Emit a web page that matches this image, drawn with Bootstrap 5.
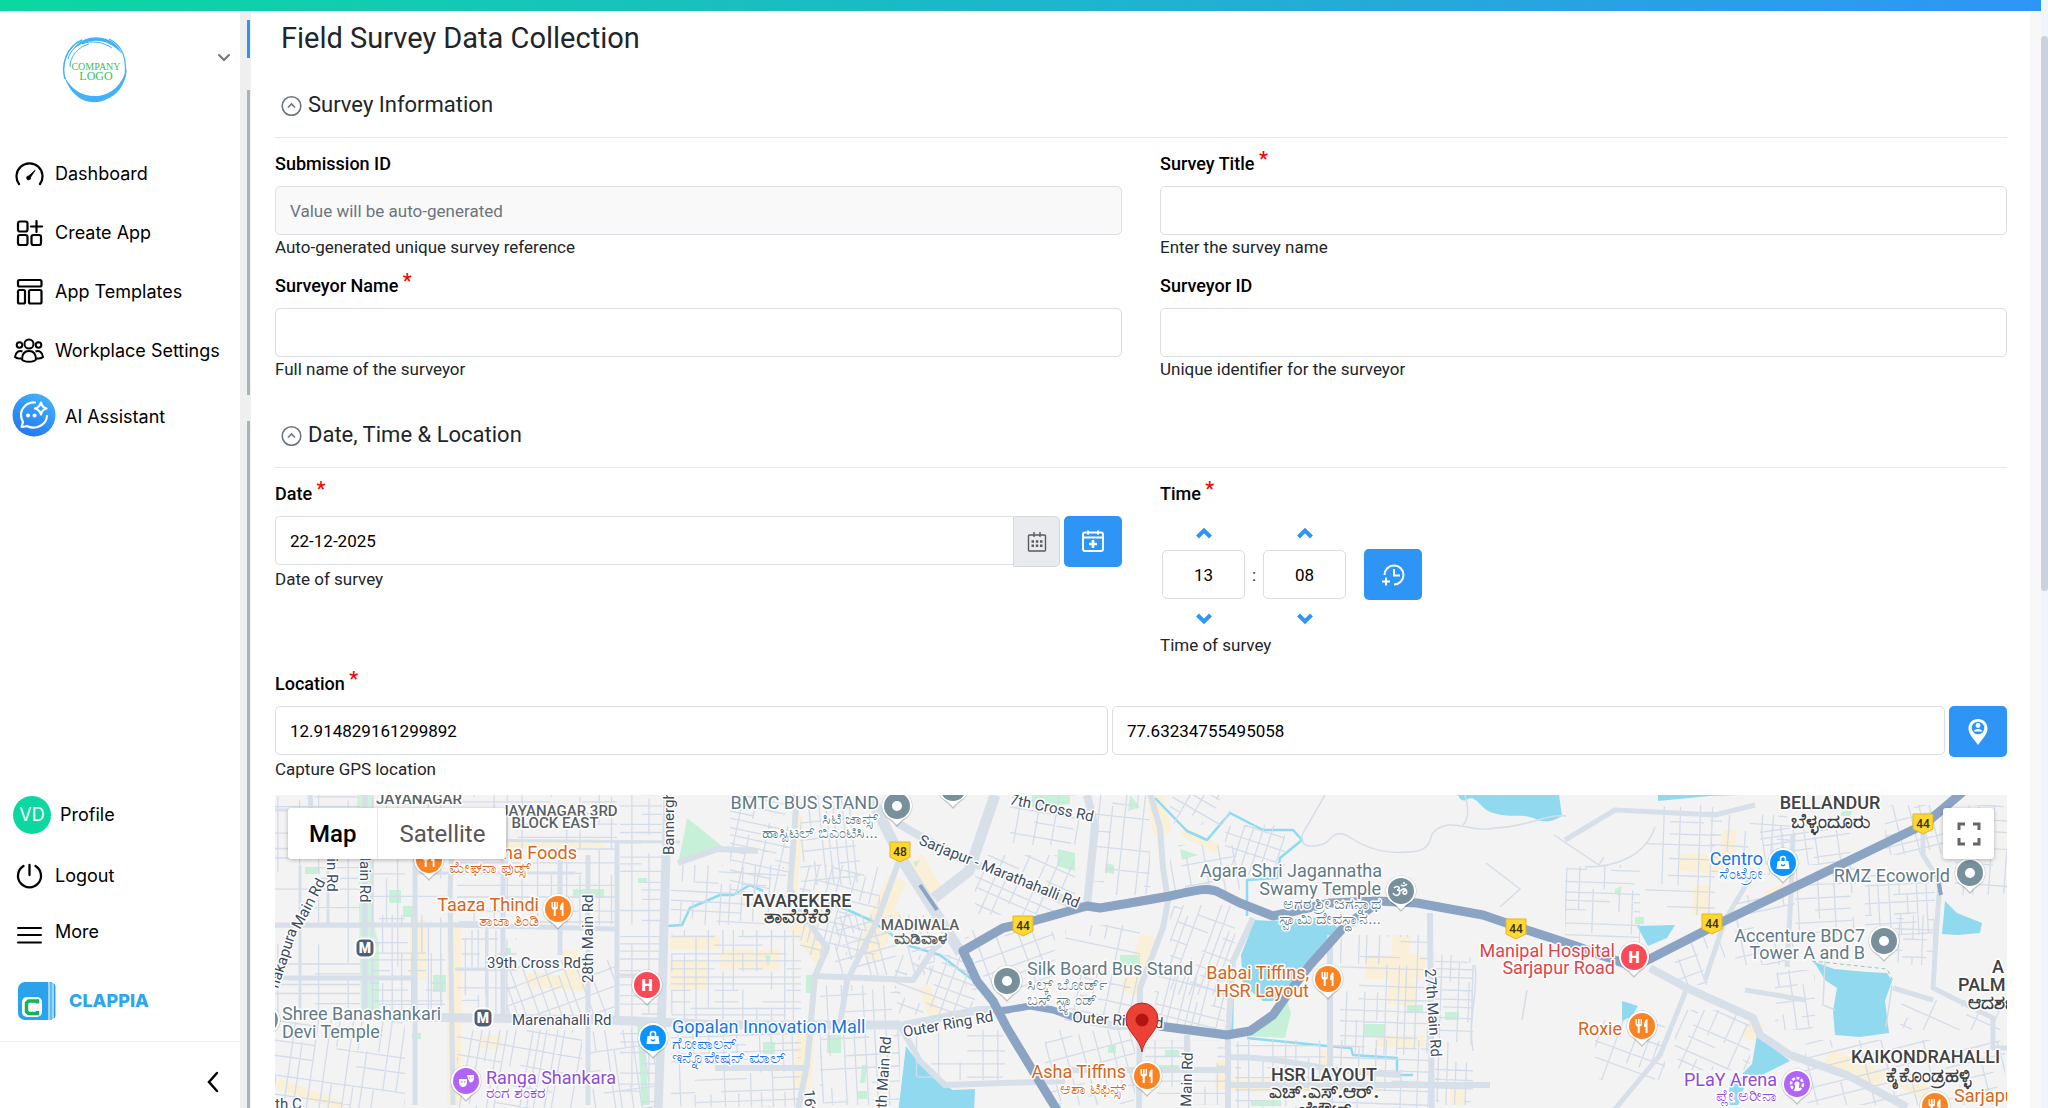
<!DOCTYPE html>
<html lang="en">
<head>
<meta charset="utf-8">
<meta name="viewport" content="width=device-width, initial-scale=1">
<title>Field Survey Data Collection</title>
<link href="https://cdn.jsdelivr.net/npm/bootstrap@5.3.0/dist/css/bootstrap.min.css" rel="stylesheet">
<style>
  body { font-family: Roboto, "Noto Sans", sans-serif; font-size: 17px; line-height: 20px; color: #212529; background: #fff; }
  .topstripe { height: 11px; background: linear-gradient(90deg, #0bd8a0, #2e95f6); }
  .sidebar { width: 240px; font-family: Inter, sans-serif; font-size: 18px; }
  .side-head { height: 133px; padding: 24px 9px 0 62px; }
  .side-link { height: 59px; padding-left: 14px; gap: 11px; color: #000; text-decoration: none; }
  .side-link svg { width: 30px; flex: none; }
  .side-ai { height: 74px; padding-left: 12px; gap: 9px; }
  .side-ai svg { width: 44px; margin-bottom: 4px; }
  .side-user { padding-left: 13px; gap: 9px; }
  .avatar { width: 38px; height: 38px; background: #0bd8a0; color: #fff; }
  .side-logout { height: 64px; }
  .side-more { height: 47px; }
  .side-brand { height: 86px; padding: 6px 0 0 17px; gap: 12px; color: #2ea5ef; font-weight: 800; }
  .side-brand svg { width: 40px; }
  .side-foot { height: 67px; border-top: 1px solid #eee; padding: 12px 21px 0 0; }
  .rail { width: 11px; background: #efefef; padding: 9px 1px 0 0; gap: 26px; }
  .rail div { width: 3px; background: #a7b5bb; }
  .rail .seg-title { height: 38px; background: #2e95f6; margin-bottom: 6px; }
  .rail .seg-info { height: 305px; }
  .content { padding: 10px 23px 0 24px; }
  .page-edge { width: 11px; background: #f8f8f8; }
  .scroll-track { width: 7px; background: #f0f5fb; padding-top: 36px; }
  .scroll-thumb { height: 555px; background: #c8d3df; border-radius: 4px; }
  h1 { font-size: 29px; line-height: 34px; font-weight: 400; padding-left: 6px; margin-bottom: 36px; }
  h2 { font-size: 22px; line-height: 28px; font-weight: 400; padding: 0 0 18px 6px; margin-bottom: 14px; border-bottom: 1px solid #e5e7ea; gap: 6px; }
  .sec-two { margin-top: 42px; }
  .form-grid { --bs-gutter-x: 38px; row-gap: 17px; }
  .fld-label { display: block; font-size: 18px; font-weight: 500; line-height: 24px; margin-bottom: 10px; color: #000; }
  .req { color: #f00; font-size: 20px; line-height: 0; position: relative; top: -4px; }
  .form-control { height: 49px; padding: 0 14px; font-size: 17px; color: #000; border-color: #d9dde4; border-radius: 5px; }
  .form-control:disabled { background: #f9f9f9; border-color: #dcdfe6; }
  .form-control::placeholder { color: #6c757d; }
  .help { margin-top: 2px; }
  .date-addon { width: 47px; height: 51px; background: #e9ebef; border: 1px solid #d3d8e0; border-radius: 0 5px 5px 0; }
  .btn-blue { width: 58px; height: 51px; padding: 0; background: #2e95f6; border: 0; border-radius: 5px; flex: none; }
  .gap-4px { gap: 4px; }
  .time-row { padding-left: 2px; }
  .time-colon { padding: 0 7px; }
  .time-now { margin-left: 18px; }
  .spin { width: 83px; gap: 3px; }
  .spin button { height: 31px; padding: 0; border: 0; background: none; }
  .spin .form-control { height: 49px; text-align: center; }
  .map { height: 480px; margin-top: 16px; background: #f4f3f4; }
  .map-canvas { font-size: 18px; }
  .map-type { top: 13px; left: 13px; height: 51px; box-shadow: 0 1px 4px #0004; border-radius: 3px; background: #fff; font-size: 24px; }
  .map-type button { border: 0; background: none; padding: 0 21px; color: #565656; }
  .map-type button:first-child { font-weight: 500; color: #000; border-right: 1px solid #e8e8e8; }
  .map-full { top: 13px; right: 13px; width: 51px; height: 51px; border: 0; border-radius: 3px; background: #fff; box-shadow: 0 1px 4px #0004; }
  .map-canvas text { paint-order: stroke; stroke: #fff; stroke-width: 3px; stroke-linejoin: round; }
  .kn { font-size: 16px; }
  .road-name { font-size: 15px; fill: #3c4c60; }
  .area-name { font-size: 18px; font-weight: 500; fill: #3f4245; text-anchor: middle; }
  .area-kn { font-size: 20px; font-weight: 700; }
  .area-minor { font-size: 15px; fill: #5a5f64; }
  .area-minor .area-kn { font-size: 17px; }
  .t-food { fill: #d9651a; } .t-shop { fill: #1a73e8; } .t-fun { fill: #8e4bd8; }
  .t-care { fill: #e0434b; } .t-place { fill: #5f7a88; }
  .t-end { text-anchor: end; }
  .t-start { text-anchor: start; }
  .map-canvas .shield-no { font-size: 12px; font-weight: 500; fill: #3a3000; stroke: none; text-anchor: middle; }
  .map-canvas .pin-letter { font-size: 16px; font-weight: 900; fill: #fff; stroke: none; text-anchor: middle; }
</style>
<script src="https://cdn.jsdelivr.net/npm/bootstrap@5.3.0/dist/js/bootstrap.bundle.min.js"></script>
</head>
<body class="vh-100 overflow-hidden d-flex">
<div class="d-flex flex-column flex-grow-1 overflow-hidden">
  <div class="topstripe flex-shrink-0"></div>
  <div class="d-flex flex-grow-1 overflow-hidden">
    <aside class="sidebar d-flex flex-column flex-shrink-0 bg-white">
      <div class="side-head d-flex justify-content-between">
        <svg width="66" height="68" viewBox="0 0 66 68" role="img" aria-label="Company logo">
          <g fill="none" stroke="#3fb2fb">
            <path d="M3 44C-1 30 4 12 20 5" stroke-width="1.500"/><path d="M47 4C60 10 65 24 63 42" stroke-width="1.200"/>
            <path d="M2 40C8 62 26 72 43 65C56 60 64 49 65 33C60 50 50 59 36 61C20 62 8 54 2 40Z" fill="#3fb2fb" stroke="none"/>
            <path d="M11 14C19 3 33-1 47 5C54 8 58 14 60 19C50 8 40 5 31 6C22 7 15 11 11 14Z" fill="#3fb2fb" stroke="none"/>
            <path d="M6 24C8 16 14 10 22 7M8 32C8 21 16 12 27 9M20 9C30 5 41 7 50 13" stroke-width="1"/>
          </g>
          <text x="34" y="35" font-family="Liberation Serif, serif" font-size="10" fill="#37c05f" text-anchor="middle">COMPANY</text>
          <text x="34" y="45" font-family="Liberation Serif, serif" font-size="12" fill="#37c05f" text-anchor="middle">LOGO</text>
        </svg>
        <button class="btn p-0 border-0 align-self-start mt-2" aria-label="Switch workplace"><svg width="14" height="16" viewBox="0 0 14 16" fill="none" stroke="#6c7680" stroke-width="2" stroke-linecap="round"><path d="M2 6l5 5 5-5"/></svg></button>
      </div>
      <nav class="d-flex flex-column flex-grow-1">
        <a href="#" class="side-link d-flex align-items-center">
          <svg height="30" viewBox="0 0 30 30" fill="none" stroke="#000" stroke-width="2.200" stroke-linecap="round"><path d="M5 25A13 13 0 1 1 26 25"/><path d="M21 11.500l-4.500 6.800a2 2 0 1 1-2-1.400z" fill="#000" stroke-width=".8"/></svg>Dashboard</a>
        <a href="#" class="side-link d-flex align-items-center">
          <svg height="30" viewBox="0 0 30 30" fill="none" stroke="#000" stroke-width="2.200" stroke-linecap="round"><rect x="4" y="3.500" width="9.500" height="10" rx="2"/><rect x="4" y="17" width="9.500" height="10" rx="2"/><rect x="17.500" y="17" width="9.500" height="10" rx="2"/><path d="M22.500 3v11M17 8.500h11"/></svg>Create App</a>
        <a href="#" class="side-link d-flex align-items-center">
          <svg height="30" viewBox="0 0 30 30" fill="none" stroke="#000" stroke-width="2.200"><rect x="4" y="3" width="23.500" height="6.500" rx="1.500"/><rect x="4" y="13" width="7" height="13.500" rx="1.500"/><rect x="15" y="13" width="12.500" height="13.500" rx="1.500"/></svg>App Templates</a>
        <a href="#" class="side-link d-flex align-items-center">
          <svg height="30" viewBox="0 0 30 30" fill="none" stroke="#000" stroke-width="2"><circle cx="15" cy="8" r="4.500"/><circle cx="5.500" cy="9" r="2.800"/><circle cx="24.500" cy="9" r="2.800"/><path d="M8 23.500C8 17.500 11 15 15 15s7 2.500 7 8.500c-2 3-12 3-14 0zM8.500 15.500C5 14 1.500 16 1 21c1.500 1.500 4 1.600 6 1.200M21.500 15.500c3.500-1.500 7 .5 7.500 5.500-1.500 1.500-4 1.600-6 1.200"/></svg>Workplace Settings</a>
        <a href="#" class="side-link side-ai d-flex align-items-center">
          <svg height="44" viewBox="0 0 44 44" fill="none" stroke="#fff" stroke-width="2.200" stroke-linecap="round" stroke-linejoin="round"><defs><linearGradient id="ai" x1=".8" y1="0" x2=".3" y2="1"><stop stop-color="#41b5fb"/><stop offset="1" stop-color="#2476ef"/></linearGradient></defs><circle cx="22" cy="22" r="21.500" fill="url(#ai)" stroke="none"/><path d="M23 9.500C15 9 9 15 9 22c0 3 .8 5 2 7l-1.500 5 6-.8c8 4 19-1 19.500-10.200"/><path d="M29 9.500c.6 3.400 2 5 5.500 6-3.500 1-4.900 2.500-5.500 6-.8-3.500-2.500-5-6-6 3.500-1 5.200-2.600 6-6z"/><path d="M16 22.500h.1M22.500 22.500h.1" stroke-width="4"/></svg>AI Assistant</a>
        <a href="#" class="side-link side-user d-flex align-items-center mt-auto"><span class="avatar rounded-circle d-flex align-items-center justify-content-center">VD</span>Profile</a>
        <a href="#" class="side-link side-logout d-flex align-items-center">
          <svg height="30" viewBox="0 0 30 30" fill="none" stroke="#000" stroke-width="2.300" stroke-linecap="round"><path d="M15.500 4v10M9.500 5A11.500 11.500 0 1 0 21.500 5"/></svg>Logout</a>
        <a href="#" class="side-link side-more d-flex align-items-center">
          <svg height="30" viewBox="0 0 30 30" stroke="#000" stroke-width="2" stroke-linecap="round"><path d="M4 11h23M4 18h23M4 25.500h23"/></svg>More</a>
        <a href="#" class="side-link side-brand d-flex align-items-center">
          <svg height="40" viewBox="0 0 40 40"><rect x="1" y="1" width="38" height="38" rx="7" fill="#2ba3ec"/><path d="M31 1h1a7 7 0 0 1 7 7v24a7 7 0 0 1-7 7h-1z" fill="#9ed5f8"/><path d="M34 1v38M37.500 3v34" stroke="#2ba3ec"/><rect x="5" y="16" width="20" height="20" rx="5" fill="#fff"/><path d="M20.500 22.500v-2.500h-9l-2 2v8.500l2 2h9v-2.500" fill="none" stroke="#12b45c" stroke-width="3.500"/></svg>CLAPPIA</a>
      </nav>
      <div class="side-foot d-flex align-items-center justify-content-end">
        <button class="btn p-0 border-0" aria-label="Collapse menu"><svg width="12" height="22" viewBox="0 0 12 22" fill="none" stroke="#000" stroke-width="2.500" stroke-linecap="round"><path d="M10 2l-8 9 8 9"/></svg></button>
      </div>
    </aside>
    <div class="rail d-flex flex-column align-items-end flex-shrink-0"><div class="seg-title"></div><div class="seg-info"></div><div class="flex-grow-1"></div></div>

    <main class="content flex-grow-1 overflow-hidden">
      <h1>Field Survey Data Collection</h1>
      <h2 class="d-flex align-items-center"><svg width="21" height="21" viewBox="0 0 21 21" fill="none" stroke="#6c757d" stroke-width="1.600"><circle cx="10.500" cy="11" r="9.300"/><path d="M7 12.500l3.500-3.500 3.500 3.500"/></svg>Survey Information</h2>
      <div class="row form-grid">
        <div class="col-6">
          <label class="fld-label" for="subId">Submission ID</label>
          <input id="subId" class="form-control" placeholder="Value will be auto-generated" disabled>
          <div class="help">Auto-generated unique survey reference</div>
        </div>
        <div class="col-6">
          <label class="fld-label" for="title">Survey Title <span class="req">*</span></label>
          <input id="title" class="form-control">
          <div class="help">Enter the survey name</div>
        </div>
        <div class="col-6">
          <label class="fld-label" for="sName">Surveyor Name <span class="req">*</span></label>
          <input id="sName" class="form-control">
          <div class="help">Full name of the surveyor</div>
        </div>
        <div class="col-6">
          <label class="fld-label" for="sId">Surveyor ID</label>
          <input id="sId" class="form-control">
          <div class="help">Unique identifier for the surveyor</div>
        </div>
      </div>

      <h2 class="sec-two d-flex align-items-center"><svg width="21" height="21" viewBox="0 0 21 21" fill="none" stroke="#6c757d" stroke-width="1.600"><circle cx="10.500" cy="11" r="9.300"/><path d="M7 12.500l3.500-3.500 3.500 3.500"/></svg>Date, Time &amp; Location</h2>
      <div class="row form-grid">
        <div class="col-6">
          <label class="fld-label" for="date">Date <span class="req">*</span></label>
          <div class="d-flex gap-4px">
            <div class="d-flex flex-grow-1">
              <input id="date" class="form-control rounded-end-0 border-end-0" value="22-12-2025">
              <button class="date-addon flex-shrink-0 p-0" aria-label="Open calendar"><svg width="20" height="20" viewBox="0 0 20 20" fill="none" stroke="#565b60" stroke-width="1.400"><rect x="1.500" y="3" width="17" height="16" rx="1"/><path d="M7 0v5M13 0v5"/><path d="M4.500 9.500h2.500M8.800 9.500h2.500M13 9.500h2.500M4.500 13.800h2.500M8.800 13.800h2.500M13 13.800h2.500" stroke-width="2.500"/></svg></button>
            </div>
            <button class="btn btn-blue" aria-label="Set today"><svg width="24" height="24" viewBox="0 0 24 24" fill="none" stroke="#fff" stroke-width="2"><rect x="2" y="2.500" width="20" height="18.500" rx="2"/><path d="M2 7.500h20M7 .5v4M17 .5v4"/><path d="M12 10v8M8 14h8" stroke-width="2.600"/></svg></button>
          </div>
          <div class="help">Date of survey</div>
        </div>
        <div class="col-6">
          <label class="fld-label" for="hour">Time <span class="req">*</span></label>
          <div class="time-row d-flex align-items-center">
            <div class="spin d-flex flex-column">
              <button aria-label="Hour up"><svg width="18" height="18" viewBox="0 0 18 18" fill="none" stroke="#2e95f6" stroke-width="4"><path d="M2.500 13L9 6.500 15.500 13"/></svg></button>
              <input id="hour" class="form-control" value="13">
              <button aria-label="Hour down"><svg width="18" height="18" viewBox="0 0 18 18" fill="none" stroke="#2e95f6" stroke-width="4"><path d="M2.500 5L9 11.500 15.500 5"/></svg></button>
            </div>
            <span class="time-colon">:</span>
            <div class="spin d-flex flex-column">
              <button aria-label="Minute up"><svg width="18" height="18" viewBox="0 0 18 18" fill="none" stroke="#2e95f6" stroke-width="4"><path d="M2.500 13L9 6.500 15.500 13"/></svg></button>
              <input class="form-control" value="08" aria-label="Minute">
              <button aria-label="Minute down"><svg width="18" height="18" viewBox="0 0 18 18" fill="none" stroke="#2e95f6" stroke-width="4"><path d="M2.500 5L9 11.500 15.500 5"/></svg></button>
            </div>
            <button class="btn btn-blue time-now" aria-label="Set current time"><svg width="24" height="24" viewBox="0 0 24 24" fill="none" stroke="#fff" stroke-width="2"><path d="M3.500 12A9.500 9.500 0 1 1 13 21.500M13 6v6.500h6"/><path d="M1 18.500h8M5 14.500v8"/></svg></button>
          </div>
          <div class="help">Time of survey</div>
        </div>
        <div class="col-12">
          <label class="fld-label" for="lat">Location <span class="req">*</span></label>
          <div class="d-flex gap-4px">
            <input id="lat" class="form-control" value="12.914829161299892">
            <input class="form-control" value="77.63234755495058" aria-label="Longitude">
            <button class="btn btn-blue" aria-label="Capture location"><svg width="20" height="26" viewBox="0 0 20 26"><path d="M10 0C4.500 0 .5 4 .5 9.500.5 15 5 19 10 26c5-7 9.500-11 9.500-16.500C19.500 4 15.500 0 10 0z" fill="#fff"/><circle cx="10" cy="9" r="6.300" fill="#2e95f6"/><circle cx="10" cy="6.500" r="2.400" fill="#fff"/><path d="M5.500 12.500c1-3.500 8-3.500 9 0z" fill="#fff"/></svg></button>
          </div>
          <div class="help">Capture GPS location</div>
        </div>
      </div>

      <div class="map position-relative overflow-hidden">
        <svg id="map" class="map-canvas d-block w-100 h-100" viewBox="0 0 1732 480" preserveAspectRatio="xMidYMin slice" role="img" aria-label="Map of the captured location">
          <g id="built" fill="#faf0d8"></g>
          <g fill="#c6f0d8">
            <path d="M412 23L447 51 403 68 408 45z"/><path d="M82 0h17v130l5 20v70H86z" opacity=".8"/>
            <path d="M30 72h15v7H30zM114 95h12v13h-12zM128 111h12v11h-12zM158 180h13v17h-13zM298 94h31v9h-31zM363 83h9v5h-9zM137 238h9v6h-9zM362 230l5 80h7l-6-80zM230 153h6v6h-6z"/>
            <path d="M757 0h38v9l-38 3zM783 54l17 4v18l-18-5zM831 68l8 2v9l-9-2zM638 67l7-2-4 7zM845 160h20v12h-20zM833 250h8v8h-8zM488 247h12v12h-12zM552 240h14v18h-14zM531 180h7v18h-7zM490 160l6 1-3 10zM582 296h10v8h-10zM587 270h5l-2 18h-5z"/>
            <path d="M882 27l5 40 2-1-3-40zM905 54l18 6-16 5zM1012 206l4 12-6 25-40-2c15-3 28-15 35-32zM1089 229h21v13h-21zM1132 210h16v8h-16zM1170 217h14v8h-14zM890 255h14v6h-14zM884 270h20v6h-20zM976 305h30v6h-30zM855 0l10 12-12 4z"/>
            <path d="M1360 122h9v7h-9zM1340 94l7-3-2 11-5-4zM1566 17l12-2-3 6h-9z"/>
          </g>
          <g fill="#90d9ef">
            <path d="M980 125l18 1 60-5 4 12-20 23-17 19-13 18-14 13-10 0-20-16-2-30z"/>
            <path d="M631 251l11 15 16 17 20 12 22-1-2 50H620z"/>
            <path d="M1183 0c2 6 6 7 12 3 8 0 12 12 23 15 20 6 30-1 45 7 10 3 15 1 24-4l-3-21z"/>
            <path d="M1383 0h82l-30 1-52 5z"/><path d="M1362 131l38-1-8 13-19 8z"/>
            <path d="M1670 106l12 12 25 10-2 10-22 2-16-1z"/>
            <path d="M1482 240l33 26-30 15-18-2 10-10zM1455 285l18-4-10 29h-10zM1347 206l16 5-6 10-10 5z"/>
          </g>
          <g fill="none" stroke="#8edaf0" stroke-width="2.500" stroke-linejoin="round">
            <path d="M392 131l15-1 8-17 30-13 13 0 17-10 13 6M550 106l25 10 20 9 37 25 33 10 33 25"/>
            <path d="M880 3l32 33 20 9 23-27 33 17h30l9 10-22 18-3 20-30 2v36"/>
            <path d="M972 243l80 8 24 2 2 7 44 3v17h16M980 125l-22 42-1 72"/>
          </g>
          <g id="streets" fill="none" stroke="#d3dce8" stroke-width="1.300"></g>
          <path d="M1537 166l22 8 33 3 20 1 5 8-7 20 4 32-29 4-25-2-2-24 4-23-12-8-9-15z" fill="#90d9ef"/>
          <g fill="none" stroke="#d5dde7" stroke-width="1.500">
            <path d="M1050 0l-22 38c-8 18 20 14 25 8s10-10 20-5c20 14 40 18 60 16 20 0 22-10 24-18 16-20 40 0 62-6 30 0 50-14 72-12M1190 0c4 14 4 24-2 30M1211 68l34 26-20 18M1198 170l-2 80M1252 195l-5 30M1279 40l45 30 5-8M1310 72c30 0 60-10 70-40"/>
            <path d="M1550 166l-2 44 12 5M1617 190l-6 42M1200 170c4 30-8 50-2 86"/>
          </g>
          <g fill="none" stroke="#d7dfe9" stroke-linejoin="round">
            <path stroke-width="5" d="M90 0v220M140 50v260M177 40l-2 60 3 210M228 60v165M285 65v95M313 60v250M342 45v185M0 130h180l160 4M0 183h137M35 0l5 60 110 0"/>
            <path stroke-width="3" d="M180 45l225 2M25 70v150M140 78h160M53 70v60M212 130v90M180 174h60M0 15h85M340 180h50"/>
            <path stroke-width="9" d="M393 0l-3 93-3 113-5 140M128 222l210 3 110 5h177"/>
            <path stroke-width="6" d="M522 0l-7 93 12 25 25 35-12 28-8 89-12 60M625 63l-23 63-30 60-8 50M540 181l98 4 20-30 18-15M440 273h94M625 231l20 35 25 24 120-4M403 68l40-14 40 2"/>
            <path stroke-width="11" d="M592-5l34 68 60 95M720 0l-26 76-35 27"/>
            <path stroke-width="8" d="M622 28l60 34 128 50M625 231l80-16 30 0M812 111l8-80-8-31M790 221l50 10h50"/>
            <path stroke-width="6" d="M875-2l10 35 3 40 5 33-5 27-23 60-1 130M978 123l-20 43-5 74v100M1055 140v200M1155 118l2 230M955 290h260M955 262c60 0 80 14 170 18M790 275h160M912 240v70"/>
            <path stroke-width="8" d="M1375 173l37 20 66 30 7 17 30 20 57 20 60 32"/>
            <path stroke-width="5" d="M1412 193l-27 67-50 60M1430 185l20-60 30-50M1518 40l-2 60-4 72M1648 30v30l17 27-3 40-4 66 60 30v30h20M1470 195l60 10M1290 45l50-30 100 5 40-10M1618 193l40 12"/>
          </g>
          <g fill="none" stroke="#8ba4c4" stroke-width="9" stroke-linejoin="round">
            <path d="M1690-5l-40 34-205 99-86 44-61-22-43-14-47-16-66-12-40-2-47 2-57 13-33-13-20-10c-10-6-20-4-50 3l-40 7-30 5-13-2-54 15-30 7-40 23 14 30 16 20 14 27 26 43 40 65"/>
            <path stroke-width="7" d="M726 216l29-5 23 4 20 7"/>
            <path d="M884 231l68 9 23-4 23-16 17-24 20-26 33-37 34-25"/>
            <path stroke-width="4" d="M645 90l17 25"/><path stroke-width="4" d="M1662 80l4 20"/>
          </g>
          <path d="M1537 166l75 8 6 12" fill="none" stroke="#8fcfa8" stroke-dasharray="4 3"/>
          <g id="shields"></g>
          <g id="pins"></g>
          <g class="t-food"><text x="228" y="64">na Foods</text><text x="174" y="78" class="kn">ಮೇಘನಾ ಫುಡ್ಸ್</text>
            <text x="264" y="116" class="t-end">Taaza Thindi</text><text x="264" y="131" class="t-end kn">ತಾಜಾ ತಿಂಡಿ</text>
            <text x="851" y="283" class="t-end">Asha Tiffins</text><text x="851" y="299" class="t-end kn">ಆಶಾ ಟಿಫಿನ್ಸ್</text>
            <text x="1034" y="184" class="t-end">Babai Tiffins,</text><text x="1034" y="202" class="t-end">HSR Layout</text>
            <text x="1347" y="240" class="t-end">Roxie</text><text x="1679" y="307">Sarjapur</text></g>
          <g class="t-shop"><text x="397" y="238">Gopalan Innovation Mall</text><text x="397" y="254" class="kn">ಗೋಪಾಲನ್</text><text x="397" y="268" class="kn">ಇನ್ನೊವೇಷನ್ ಮಾಲ್</text>
            <text x="1488" y="70" class="t-end">Centro</text><text x="1488" y="84" class="t-end kn">ಸೆಂಟ್ರೋ</text></g>
          <g class="t-fun"><text x="211" y="289">Ranga Shankara</text><text x="211" y="303" class="kn">ರಂಗ ಶಂಕರ</text>
            <text x="1502" y="291" class="t-end">PLaY Arena</text><text x="1502" y="306" class="t-end kn">ಪ್ಲೇ ಅರೀನಾ</text></g>
          <g class="t-care t-end"><text x="1340" y="162">Manipal Hospital</text><text x="1340" y="179">Sarjapur Road</text></g>
          <g class="t-place"><text x="7" y="225">Shree Banashankari</text><text x="7" y="243">Devi Temple</text>
            <text x="604" y="14" class="t-end">BMTC BUS STAND</text><text x="603" y="29" class="t-end kn">ಸಿಟಿ ಜಾನ್ಸ್</text><text x="603" y="43" class="t-end kn">ಹಾಸ್ಪಿಟಲ್ ಬಿಎಂಟಿಸಿ...</text>
            <text x="752" y="180">Silk Board Bus Stand</text><text x="752" y="195" class="kn">ಸಿಲ್ಕ್ ಬೋರ್ಡ್</text><text x="752" y="210" class="kn">ಬಸ್ ಸ್ಟ್ಯಾಂಡ್</text>
            <text x="1107" y="82" class="t-end">Agara Shri Jagannatha</text><text x="1106" y="100" class="t-end">Swamy Temple</text><text x="1106" y="114" class="t-end kn">ಅಗರ ಶ್ರೀ ಜಗನ್ನಾಥ</text><text x="1106" y="129" class="t-end kn">ಸ್ವಾಮಿ ದೇವಸ್ಥಾನ...</text>
            <text x="1675" y="87" class="t-end">RMZ Ecoworld</text><text x="1590" y="147" class="t-end">Accenture BDC7</text><text x="1590" y="164" class="t-end">Tower A and B</text></g>
          <g class="area-name">
            <text x="522" y="112">TAVAREKERE</text><text x="522" y="128" class="area-kn">ತಾವೆರೆಕೆರೆ</text>
            <text x="1049" y="286">HSR LAYOUT</text><text x="1049" y="303" class="area-kn">ಎಚ್.ಎಸ್.ಆರ್.</text><text x="1049" y="321" class="area-kn">ಲೇಔಟ್</text>
            <text x="1555" y="14">BELLANDUR</text><text x="1555" y="33" class="area-kn">ಬೆಳ್ಳಂದೂರು</text>
            <text x="1653" y="287" class="area-kn">ಕೈಕೊಂಡ್ರಹಳ್ಳಿ</text></g>
          <g class="area-name t-start">
            <text x="1576" y="268">KAIKONDRAHALLI</text>
            <text x="1717" y="178">A</text><text x="1683" y="196">PALM</text><text x="1693" y="214" class="area-kn">ಆದರ್ಶ</text></g>
          <g class="area-name area-minor"><text x="144" y="9">JAYANAGAR</text><text x="284" y="21">JAYANAGAR 3RD</text><text x="280" y="33">BLOCK EAST</text><text x="645" y="135">MADIWALA</text><text x="645" y="149" class="area-kn">ಮಡಿವಾಳ</text></g>
          <g class="road-name">
            <text x="212" y="173">39th Cross Rd</text><text x="237" y="230">Marenahalli Rd</text>
            <text transform="translate(318 188) rotate(-90)">28th Main Rd</text>
            <text transform="translate(399 60) rotate(-90)">Bannerghatta Rd</text>
            <text transform="translate(85 36) rotate(90)">th Main Rd</text><text transform="translate(52 42) rotate(90)">Main Rd</text>
            <text transform="translate(3 194) rotate(-72)">nakapura</text><text transform="translate(25 135) rotate(-62)">Main Rd</text>
            <text transform="translate(734 9) rotate(12)">7th Cross Rd</text>
            <text transform="translate(643 49) rotate(22)">Sarjapur - Marathahalli Rd</text>
            <text transform="translate(629 242) rotate(-10)">Outer Ring Rd</text><text transform="translate(797 227) rotate(4)">Outer Ring Rd</text>
            <text transform="translate(610 330) rotate(-86)">17th Main Rd</text><text transform="translate(529 295) rotate(86)">16th</text>
            <text transform="translate(916 312) rotate(-88)">Main Rd</text><text transform="translate(1150 174) rotate(86)">27th Main Rd</text>
            <text x="0" y="314">th C</text></g>
          <path d="M867 257c-2-14-16-20-16-33a16 16 0 0 1 32 0c0 13-14 19-16 33z" fill="#ea4335" stroke="#c5221f"/><circle cx="867" cy="225" r="6.500" fill="#b31412"/>
        </svg>
        <div class="map-type d-flex position-absolute"><button>Map</button><button>Satellite</button></div>
        <button class="map-full position-absolute p-0" aria-label="Full screen"><svg width="24" height="24" viewBox="0 0 24 24" fill="none" stroke="#666" stroke-width="3"><path d="M2 8V2h6M16 2h6v6M22 16v6h-6M8 22H2v-6"/></svg></button>
      </div>
    </main>
    <div class="page-edge flex-shrink-0"></div>
  </div>
</div>
<div class="scroll-track flex-shrink-0"><div class="scroll-thumb"></div></div>

<script>
  const el = id => document.getElementById(id);
  let seed = 7;
  const rnd = () => (seed = (seed * 16807) % 2147483647) / 2147483647;

  // Street blocks: x, y, width, height, angle in degrees, spacing across, spacing down
  const blocks = [
    [0,0,85,220,0,26,9],[95,0,75,220,0,13,22],[0,225,130,90,8,11,19],[98,120,70,100,0,9,15],[182,0,160,130,0,16,13],[182,135,60,85,0,9,14],
    [232,165,110,60,-20,10,16],[345,0,42,310,0,14,9],[182,235,125,80,10,9,22],[315,235,65,80,-8,9,18],[396,70,115,60,3,12,9],[396,135,130,90,0,12,9],
    [396,232,130,80,-2,13,10],[455,0,60,100,12,15,8],[525,0,60,90,-6,9,14],[525,70,80,90,14,8,13],[560,120,100,60,-15,8,13],[545,190,80,120,-3,12,16],
    [620,160,80,60,20,14,10],[640,235,90,50,0,18,12],[690,135,90,60,-20,17,13],[700,60,100,60,24,15,12],[735,0,70,50,10,20,13],[815,0,60,100,6,10,17],
    [790,130,75,90,12,12,17],[770,235,90,75,-15,14,15],[895,110,65,90,20,8,19],[895,50,70,50,-10,14,17],[880,180,70,55,14,9,12],[950,30,60,50,18,12,18],
    [1065,140,90,120,2,10,14],[1055,245,100,70,2,14,11],[960,245,90,70,0,13,12],[1160,160,38,150,2,12,10],[870,245,80,65,0,15,12],[895,0,60,30,30,14,13],
    [1290,70,75,90,2,12,11],[1370,10,70,110,2,17,13],[1435,20,80,60,4,14,11],[1520,70,75,70,-3,18,12],[1590,80,70,60,-3,11,10],[1680,10,52,90,4,13,16],
    [1610,10,60,50,-14,12,11],[1485,30,90,40,-8,12,9],[1320,225,70,60,20,14,16],[1400,215,75,60,24,15,13],[1500,175,40,60,-8,12,14],[1620,120,40,50,2,12,9],
    [1400,140,50,50,-20,18,14],[1625,205,105,30,24,22,16],[1530,245,200,65,-14,23,17],[1460,100,60,70,-12,20,15]
  ];
  let defs = '', out = '';
  blocks.forEach(([x, y, w, h, a, sx, sy], i) => {
    const cx = x + w / 2, cy = y + h / 2, r = Math.max(w, h) * .72;
    let d = '';
    for (let u = -r; u < r; u += sx * (.7 + rnd() * .6))
      for (let v = -r; v < r; v += sy * 2) if (rnd() > .25) d += `M${u.toFixed(1)} ${v.toFixed(1)}v${(sy * 2)}`;
    for (let v = -r; v < r; v += sy * (.7 + rnd() * .6))
      for (let u = -r; u < r; u += sx * 2) if (rnd() > .25) d += `M${u.toFixed(1)} ${v.toFixed(1)}h${(sx * 2)}`;
    defs += `<clipPath id="b${i}"><rect x="${x}" y="${y}" width="${w}" height="${h}" rx="8"/></clipPath>`;
    out += `<g clip-path="url(#b${i})"><path transform="translate(${cx} ${cy}) rotate(${a})" d="${d}"/></g>`;
  });
  el('streets').innerHTML = '<defs>' + defs + '</defs>' + out;

  // Commercial strips: x, y, width, height, angle
  el('built').innerHTML = [[135,125,16,60,0],[172,130,14,180,0],[250,180,60,14,5],[180,45,150,8,0],[395,140,50,14,0],[395,165,40,30,0],[515,20,10,90,5],[525,120,18,50,-35],
    [600,80,20,60,25],[590,110,25,55,25],[640,60,18,40,-30],[445,155,60,20,0],[520,235,18,60,3],[648,190,12,30,-20],[875,0,18,40,-10],[905,40,40,10,25],[1115,140,18,70,5],
    [1090,160,60,24,0],[955,285,150,12,0],[1045,255,14,50,0],[940,265,15,30,0],[1100,240,50,12,0],[1175,290,14,20,0],[1405,60,50,18,5],[1418,90,16,30,5],[1447,35,14,30,0],
    [1490,90,35,14,-20],[1550,265,60,18,24],[1470,225,16,20,25],[1615,285,50,14,25],[205,240,22,14,0],[0,295,70,10,20],[287,155,18,40,0],[855,140,20,60,20],[1128,185,12,25,0]]
    .map(([x, y, w, h, a]) => `<rect x="${x}" y="${y}" width="${w}" height="${h}" rx="3" transform="rotate(${a} ${x + w / 2} ${y + h / 2})"/>`).join('');

  const glyph = {
    food: '<path d="M-6.500-7v5q0 2.500 2.200 2.500V7h2V.5Q0 .5 0-2v-5h-1.400v5h-1v-5h-1.700v5h-1v-5zM5.500-7C3-6 2-4 2 1h1.700v6h1.800z" fill="#fff"/>',
    dot: '<circle r="5" fill="#fff"/>',
    shop: '<path d="M-5.500-2h11L6.500 6h-13z" fill="#fff"/><path d="M-2.500-1v-3a2.500 2.500 0 0 1 5 0v3" fill="none" stroke="#fff" stroke-width="1.600"/><path d="M-2 1.500q2 2.500 4 0" fill="none" stroke="#0b8cff" stroke-width="1.300"/>',
    care: '<text class="pin-letter" y="6">H</text>',
    fun: '<path d="M-7-2h8v4q-1 4-4 4t-4-4zM1-6h7v4q-1 4-4 3.500L2-2z" fill="#fff"/><path d="M-5 1h1.500M-2 1h1.500M3-3h1M5.500-3h1" stroke="#a95cf6"/>',
    arena: '<circle r="6" fill="none" stroke="#fff" stroke-width="2.500" stroke-dasharray="3 1.500"/><circle r="2.500" fill="#fff"/><path d="M-2 7V2h4v5z" fill="#fff"/>',
    om: '<path d="M-7-3c3-3 6-1 5 1-1 1-2 1-2 1 3 0 4 3 1 5-2 1-4 0-5-2M-2 0c3 0 3-3 6-2 3 2 2 6-1 5-2-1-1-4 3-3M0-6q3 2 6-1" fill="none" stroke="#fff" stroke-width="1.600"/><circle cx="3" cy="-8" r="1" fill="#fff"/>'
  };
  const tint = { food: '#fb8324', dot: '#78909c', shop: '#0b94ff', care: '#f94b57', fun: '#b264f8', arena: '#b264f8', om: '#78909c' };
  el('pins').innerHTML = [[154,65,'food'],[283,114,'food'],[372,190,'care'],[378,243,'shop'],[191,286,'fun'],[622,11,'dot'],[678,-7,'dot'],[732,186,'dot'],[872,281,'food'],
    [1053,184,'food'],[1126,96,'om'],[1359,162,'care'],[1367,231,'food'],[1508,68,'shop'],[1695,78,'dot'],[1609,146,'dot'],[1522,289,'arena'],[1660,311,'food'],[-10,225,'dot']]
    .map(([x, y, t]) => `<g transform="translate(${x} ${y})"><path d="M0 21Q-4 16-11 11A15.500 15.500 0 1 1 11 11Q4 16 0 21z" fill="#0003"/><path d="M0 19Q-4 14-11 10A15 15 0 1 1 11 10Q4 14 0 19z" fill="#fff"/><circle r="13" fill="${tint[t]}"/>${glyph[t]}</g>`).join('')
    + [[90,153],[208,223]].map(([x, y]) => `<g transform="translate(${x} ${y})"><rect x="-9.500" y="-9.500" width="19" height="19" rx="6" fill="#4d6073" stroke="#fff" stroke-width="2"/><text class="pin-letter" y="5" style="font-size:14px">M</text></g>`).join('');
  el('shields').innerHTML = [[625,56,48],[748,130,44],[1241,133,44],[1437,128,44],[1648,28,44]]
    .map(([x, y, n]) => `<g transform="translate(${x} ${y})"><path d="M-10-9h20V6L0 11-10 6z" fill="#fdd835" stroke="#e3b61c" stroke-linejoin="round"/><text class="shield-no" y="5">${n}</text></g>`).join('');
</script>
</body>
</html>
